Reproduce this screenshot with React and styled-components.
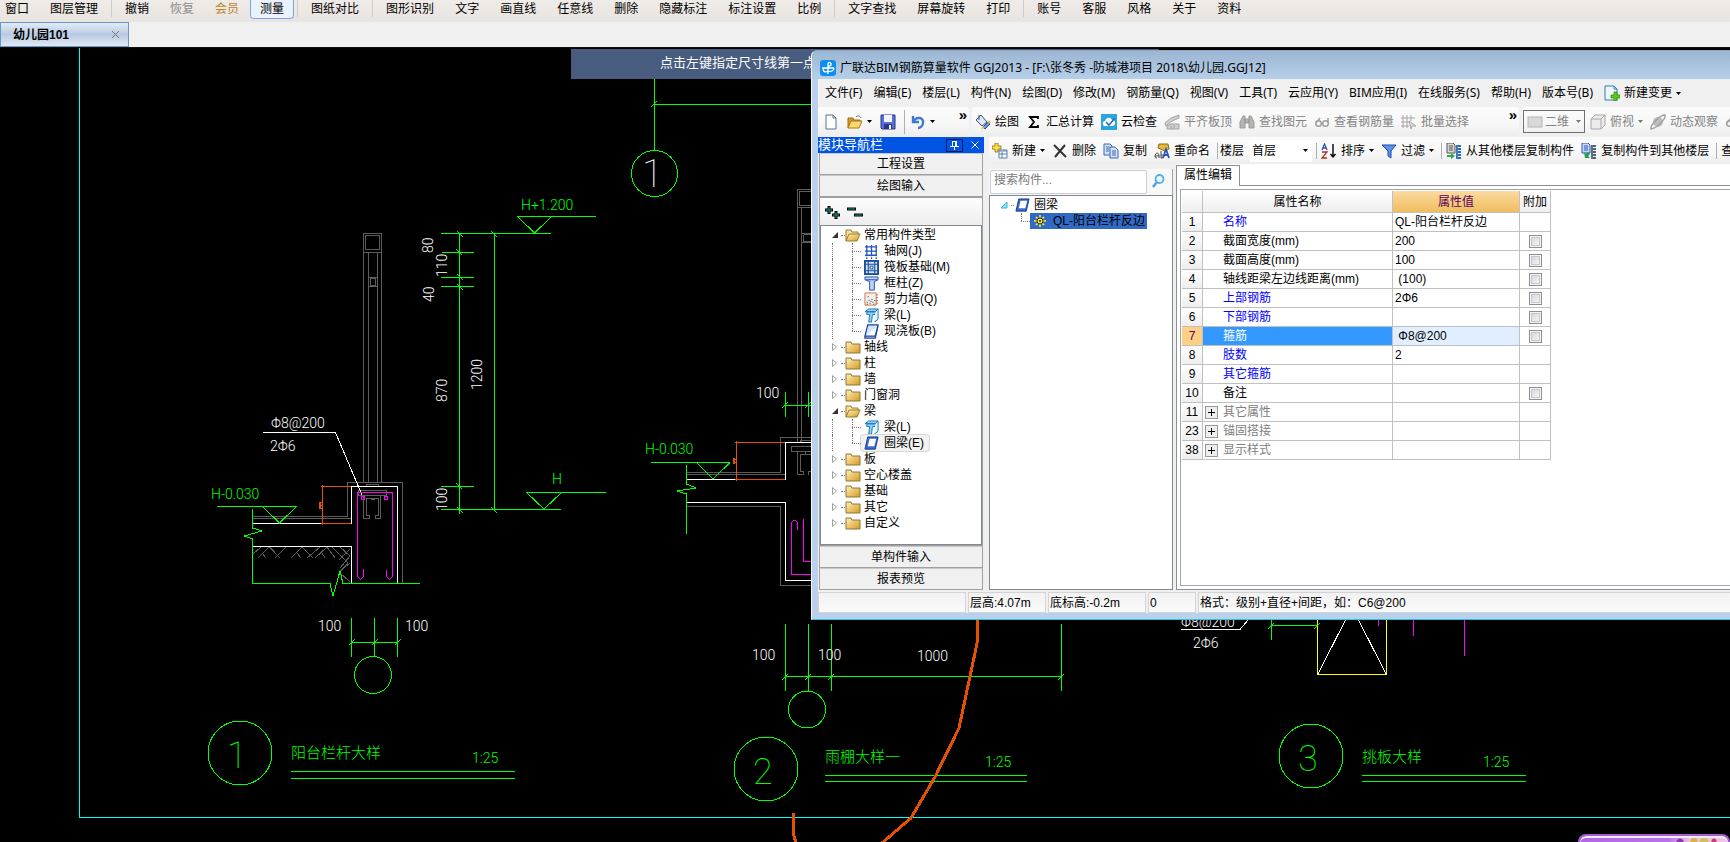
import React, {Fragment} from "react";
import styled, {createGlobalStyle} from "styled-components";

const GlobalStyle = createGlobalStyle`
* { box-sizing: border-box; }
body { margin: 0; overflow: hidden; }
button, input, select { font: inherit; color: inherit; margin: 0; }
`

const sans = `"Liberation Sans", "Noto Sans CJK SC", sans-serif`;
const ui = `"Noto Sans", "Noto Sans CJK SC", sans-serif`;
const cad = `Roboto, "Noto Sans CJK SC", sans-serif`;

const GREEN = "#00ff00";
const GRAY = "#5c5c5c";
const PINK = "#ff00ff";
const ORANGE = "#e65000";

const Page = styled.div`
height: 100vh;
display: flex;
flex-direction: column;
overflow: hidden;
font: 12px/16px ${sans};
color: #000;
background: #000;
`

/* ---------- viewer toolbar ---------- */

const TopBar = styled.header`
flex: none;
height: 22px;
display: flex;
align-items: flex-start;
gap: 1px;
margin-left: -5px;
overflow: hidden;
background: linear-gradient(#efebe8, #e9e4df);
`

const TopButton = styled.button`
flex: none;
height: 19px;
padding: 0 ${p => p.$active ? "9px" : "10px"} 1px;
border: ${p => p.$active ? "1px solid #7da7e8" : "none"};
border-top: none;
border-radius: 0 0 4px 4px;
background: ${p => p.$active ? "#eaf2fd" : "none"};
color: ${p => p.$color || "#000"};
line-height: 16px;
white-space: nowrap;
`

const TopSep = styled.span`
flex: none;
width: 1px;
height: 17px;
margin: 0 2px;
background: #cfcbc8;
`

const TabStrip = styled.nav`
flex: none;
height: 26px;
display: flex;
background: #f0f0f0;
border-bottom: 1px solid #111;
`

const FileTab = styled.div`
width: 129px;
display: flex;
align-items: center;
justify-content: space-between;
padding: 0 8px 0 12px;
border: 1px solid #6c95c6;
background: linear-gradient(#e3ebf5, #b8cbe3 50%, #dfe9f4);
font-weight: bold;
`

const TabClose = styled.button`
width: 9px;
height: 9px;
padding: 0;
border: none;
background: none;
display: flex;
`

/* ---------- drawing area ---------- */

const Canvas = styled.main`
position: relative;
flex: 1;
overflow: hidden;
background: #000;
`

const Sheet = styled.svg`
position: absolute;
inset: 0;
width: 100%;
height: 100%;
shape-rendering: crispEdges;
font-family: ${cad};
font-weight: 300;
`

const Hint = styled.div`
position: absolute;
top: 1px;
left: 33%;
width: 34%;
height: 30px;
padding-left: 89px;
background: #485c80;
color: #fff;
font-size: 13px;
line-height: 28px;
white-space: nowrap;
`

const PurpleBadge = styled.div`
position: absolute;
right: 0;
bottom: 0;
width: 152px;
height: 8px;
overflow: hidden;
border: 2px solid #a35fd0;
border-bottom: none;
border-radius: 14px 14px 0 0;
box-shadow: inset 0 2px #f8e8ff;
background:
radial-gradient(circle at 100px 6px, #8a3aa8 3px, transparent 4px),
radial-gradient(circle at 114px 5px, #d8b050 3px, transparent 4px),
radial-gradient(circle at 124px 6px, #d0c060 4px, transparent 5px),
radial-gradient(circle at 134px 5px, #c83c78 2px, transparent 3px),
linear-gradient(90deg, #b268e0, #b874e4 60%, #ecc8e0 75%);
`

/* ---------- floating window ---------- */

const Window = styled.section`
position: absolute;
top: 2px;
left: 811px;
right: -8px;
height: 570px;
display: flex;
flex-direction: column;
padding: 0 6px 6px;
border: 1px solid #f4f8fc;
border-top-color: #8fa9c4;
border-bottom-color: #2cc4e0;
border-radius: 6px 0 0 0;
background: #b9d1ea;
overflow: hidden;
`

const TitleBar = styled.div`
flex: none;
height: 28px;
margin: 0 -6px;
padding: 5px 8px 0;
display: flex;
align-items: center;
gap: 4px;
background: linear-gradient(#9cb5d2, #b6cfe9);
font-family: ${ui};
font-size: 12px;
white-space: nowrap;
`

const MenuBar = styled.nav`
flex: none;
height: 28px;
padding-left: 2px;
display: flex;
align-items: center;
gap: 1px;
background: #f0f0f0;
font-family: ${ui};
`

const MenuItem = styled.button`
flex: none;
padding: 0 5px;
border: none;
background: none;
display: flex;
align-items: center;
gap: 4px;
white-space: nowrap;
`

const Bar = styled.div`
flex: none;
display: flex;
gap: 3px;
height: ${p => p.$h}px;
background: #f0f0f0;
`

const BarGroup = styled.div`
flex: ${p => p.$grow ? "1 0 auto" : "none"};
width: ${p => p.$w ? p.$w + "px" : "auto"};
display: flex;
align-items: center;
gap: ${p => p.$loose ? 2 : 1}px;
padding-left: ${p => p.$loose ? 2 : 0}px;
border-radius: 3px;
background: linear-gradient(#fcfcfc, #f7f7f7 60%, #ededed);
font-family: ${ui};
`

const ToolButton = styled.button`
flex: none;
height: 22px;
padding: 0 3px;
border: none;
background: none;
display: flex;
align-items: center;
gap: 4px;
color: ${p => p.$off ? "#838383" : "#000"};
white-space: nowrap;
`

const More = styled.button`
align-self: flex-start;
height: 16px;
margin: 0 2px 0 auto;
padding: 0;
border: none;
background: none;
font-family: ${sans};
font-size: 15px;
font-weight: bold;
line-height: 14px;
`

const Sep = styled.span`
flex: none;
width: 1px;
height: ${p => p.$h || 16}px;
margin-left: 3px;
background: #b0b0b0;
`

const ViewPick = styled.label`
flex: none;
width: 62px;
height: 23px;
margin: 0 1px;
padding: 0 3px;
display: flex;
align-items: center;
gap: 2px;
border: 1px solid #707070;
color: #838383;
`

const BareSelect = styled.select`
flex: 1;
min-width: 0;
height: 20px;
padding: 0;
border: none;
background: none;
appearance: none;
outline: none;
`

const FloorPick = styled.label`
flex: none;
display: flex;
align-items: center;
gap: 6px;
padding-left: 1px;
`

const FloorBox = styled.span`
width: 62px;
height: 22px;
padding: 0 4px 0 2px;
display: flex;
align-items: center;
background: #fff;
`

const Body = styled.div`
flex: 1;
min-height: 0;
display: grid;
grid-template-columns: 166px minmax(0, 1fr);
column-gap: 5px;
padding-top: 1px;
background: #f0f0f0;
`

const Dock = styled.aside`
min-height: 0;
display: flex;
flex-direction: column;
padding-bottom: 2px;
`

const DockTitle = styled.div`
flex: none;
height: 16px;
display: flex;
align-items: center;
background: #0054e3;
color: #fff;
font-size: 13px;
line-height: 14px;
`

const PinButton = styled.button`
width: 17px;
height: 13px;
margin-left: auto;
padding: 0;
display: flex;
align-items: center;
justify-content: center;
border: 1px solid #001c58;
border-width: ${p => p.$plain ? "0" : "1px"};
background: none;
& + & { margin: 0 1px 0 3px; }
`

const DockButton = styled.button`
flex: none;
height: 22px;
margin: 0 1px;
padding: 0;
border: 1px solid #a0a0a0;
border-top-color: #c8c8c8;
background: #f0f0f0;
`

const DockPane = styled.div`
flex: 1;
min-height: 0;
display: flex;
flex-direction: column;
margin: 0 1px;
border: 1px solid #a0a0a0;
background: linear-gradient(#fdfdfd, #eee 26px);
`

const PaneTools = styled.div`
flex: none;
height: 27px;
padding: 0 3px;
display: flex;
align-items: center;
gap: 5px;
`

const Bare = styled.button`
padding: 0;
border: none;
background: none;
display: flex;
`

const Tree = styled.ul`
flex: 1;
margin: 0;
padding: 1px 0;
list-style: none;
border: 1px solid #828790;
background: #fff;
`

const TreeRow = styled.li`
height: 16px;
display: flex;
align-items: center;
padding-left: 10px;
white-space: nowrap;
`

const Dots = styled.span`
flex: none;
width: ${p => p.$w}px;
border-top: 1px dotted #777;
`

const Rail = styled.span`
flex: none;
width: ${p => p.$w}px;
height: 16px;
margin-left: 1px;
border-left: 1px dotted #777;
`

const Elbow = styled.span`
flex: none;
width: 9px;
height: 16px;
position: relative;
&::before {
content: "";
position: absolute;
left: 0;
top: 0;
height: ${p => p.$last ? "8px" : "16px"};
border-left: 1px dotted #777;
}
&::after {
content: "";
position: absolute;
left: 0;
right: 0;
top: 8px;
border-top: 1px dotted #777;
}
`

const Leaf = styled.span`
display: flex;
align-items: center;
gap: 5px;
height: 16px;
padding: 0 5px 0 3px;
border-radius: 3px;
box-shadow: ${p => p.$on ? "0 0 0 1px #d8d8d8" : "none"};
background: ${p => p.$on ? "#f2f2f2" : "none"};
`

const Toggle = styled.svg`
flex: none;
width: 8px;
height: 8px;
margin-right: 2px;
`

const Work = styled.div`
min-width: 0;
min-height: 0;
display: flex;
flex-direction: column;
`

const Split = styled.div`
flex: 1;
min-height: 0;
display: grid;
grid-template-columns: 184px minmax(0, 1fr);
column-gap: 3px;
`

const PartList = styled.div`
min-height: 0;
display: flex;
flex-direction: column;
padding-top: 5px;
`

const SearchRow = styled.form`
flex: none;
height: 26px;
padding: 1px 6px 0 1px;
display: flex;
align-items: flex-start;
justify-content: space-between;
background: #f8f8f8;
border-right: 1px solid #a0a0a0;
`

const SearchInput = styled.input`
width: 157px;
height: 24px;
padding: 0 3px 4px;
border: 1px solid #c8cdd8;
border-radius: 2px;
background: #fff;
outline: none;
&::placeholder { color: #7a7a7a; opacity: 1; }
`

const PartTree = styled(Tree)`
margin-bottom: 2px;
padding: 1px 0;
`

const PartRow = styled.li`
height: 16px;
display: flex;
align-items: center;
gap: ${p => p.$gap}px;
padding-left: ${p => p.$indent}px;
white-space: nowrap;
`

const PickedPart = styled.span`
display: flex;
align-items: center;
gap: 7px;
width: 117px;
height: 16px;
padding-left: 4px;
background: #316ac5;
`

const Props = styled.div`
min-width: 0;
min-height: 0;
display: flex;
flex-direction: column;
padding-top: 1px;
margin-bottom: 2px;
background: #fff;
`

const PropTabs = styled.div`
flex: none;
height: 21px;
display: flex;
&::after { content: ""; flex: 1; border-bottom: 1px solid #8b8f99; }
`

const PropTab = styled.button`
width: 64px;
padding: 0 0 2px;
border: 1px solid #8b8f99;
border-bottom: none;
background: #fff;
`

const PropPage = styled.div`
flex: 1;
padding: 3px 0 3px 3px;
border-left: 1px solid #8b8f99;
border-bottom: 1px solid #8b8f99;
`

const PropFrame = styled.div`
height: 100%;
padding: 1px;
border: 1px solid #a0a4ac;
`

const Grid = styled.table`
border-collapse: separate;
border-spacing: 0;
table-layout: fixed;
width: 369px;
`

const HeadCell = styled.th`
width: ${p => p.$w}px;
height: 22px;
padding: 0;
border-right: 1px solid #c0c0c0;
border-bottom: 1px solid #c0c0c0;
background: ${p => p.$on ? "linear-gradient(#fadba0, #f0bd5e)" : "linear-gradient(#fff, #eee)"};
color: ${p => p.$on ? "#5b0060" : "#000"};
font-weight: normal;
`

const Cell = styled.td`
height: 19px;
padding: 0 0 0 2px;
border-right: 1px solid #c0c0c0;
border-bottom: 1px solid #c0c0c0;
background: ${p => p.$bg || "#fff"};
line-height: 16px;
white-space: pre;
`

const NumCell = styled(Cell)`
padding: 0;
text-align: center;
color: ${p => p.$on ? "#5b0060" : "#000"};
background: ${p => p.$on ? "#ffd083" : "linear-gradient(#fff, #eee)"};
`

const NameCell = styled(Cell)`
color: ${p => p.$color};
& > span { display: flex; align-items: center; }
`

const Expander = styled.button`
width: 13px;
height: 13px;
margin-right: 5px;
padding: 1px;
border: 1px solid #999;
background: #eee;
display: flex;
`

const Indent = styled.span`
width: 18px;
`

const CheckCell = styled(Cell)`
padding: 0 0 0 1px;
text-align: center;
`

const Check = styled.input`
appearance: none;
display: block;
width: 13px;
height: 13px;
margin: 0 auto;
border: 1px solid #8e8f8f;
background: linear-gradient(135deg, #cfd2d8, #fafafa);
box-shadow: inset 0 0 0 1px #f4f4f4, inset 0 0 0 2px #c4c8cc;
`

const StatusBar = styled.footer`
flex: none;
height: 21px;
display: flex;
gap: 2px;
background: #f0f0f0;
`

const StatusCell = styled.div`
flex: ${p => p.$w ? "none" : "1"};
width: ${p => p.$w ? p.$w + "px" : "auto"};
padding-left: 1px;
border: 1px solid #d4d4d4;
background: linear-gradient(#f2f2f2, #fafafa);
line-height: 20px;
white-space: nowrap;
`

/* ---------- icons ---------- */

const shapes = {
    logo: <Fragment>
        <rect width="16" height="16" rx="3" fill="#0d8ff2"/>
        <path d="M8 14V4c0-3 4-1 3 1l-3 2M2 8h12M4 8c-2 3 1 5 4 3M14 8c0 3-3 4-6 3" fill="none" stroke="#fff" strokeWidth="1.3"/>
    </Fragment>,
    doc: <path d="M3 1h7l3 3v11H3zM10 1v3h3" fill="#fbfdff" stroke="#5c7388"/>,
    open: <Fragment>
        <path d="M1 14V4h5l1 2h6v3" fill="#d59a2d" stroke="#9c6a12"/>
        <path d="M1 14l3-7h11l-3 7z" fill="#ffd76e" stroke="#a87716"/>
        <path d="M9 3c2-2 4-1 5 1" fill="none" stroke="#3a6ea5"/>
    </Fragment>,
    save: <Fragment>
        <path d="M1 1h14v14H2l-1-1z" fill="#5a6fd8" stroke="#26348a"/>
        <path d="M4 1h8v7H4z" fill="#f2f5ff"/>
        <path d="M4 10h8v5H4z" fill="#26348a"/>
        <path d="M9 11h2v4H9z" fill="#fff"/>
    </Fragment>,
    undo: <path d="M3 2v6h6M3 8c3-6 11-5 10 1 0 3-3 5-5 5" fill="none" stroke="#3e7ad4" strokeWidth="2.4"/>,
    paint: <Fragment>
        <path d="M1 6l5-5 6 7-5 4z" fill="#dfe7f2" stroke="#365078"/>
        <path d="M4 1v5" stroke="#365078"/>
        <path d="M13 8l2 2-5 5-2-2z" fill="#5b9bf0" stroke="#1d4f9e"/>
        <path d="M6 15l2-3 2 2z" fill="#f0b030"/>
        <circle cx="14" cy="8" r="1.5" fill="#f0b030"/>
    </Fragment>,
    sigma: <path d="M12 5V3H4l4 5-4 5h8v-2" fill="none" stroke="#000" strokeWidth="1.8"/>,
    cloud: <Fragment>
        <rect width="16" height="16" fill="#2ba3e0"/>
        <path d="M3 12c-3-3 0-5 1-5 1-4 6-4 7-1 4 0 4 5 1 6z" fill="#fff"/>
        <path d="M5 8l3 3 6-7" fill="none" stroke="#2278b5" strokeWidth="1.6"/>
    </Fragment>,
    align: <g fill="#cfcfcf" stroke="#a4a4a4">
        <path d="M1 9l6-5 8-3v3L8 7l-6 5z"/><path d="M3 15v-3l4-2h8v5zM7 12v3M10 11v4"/>
    </g>,
    find: <g fill="#b4b4b4" stroke="#999">
        <path d="M1 14V8l3-6h2v12zM15 14V8l-3-6h-2v12zM6 5h4v4H6z"/>
    </g>,
    glasses: <g fill="none" stroke="#a0a0a0" strokeWidth="1.5">
        <circle cx="4.500" cy="9.500" r="2.800"/><circle cx="11.500" cy="9.500" r="2.800"/><path d="M2 9l4-5M14 9V4"/>
    </g>,
    batch: <g fill="none" stroke="#a5a5a5">
        <path d="M2 1v13M6 1v13M10 1v6M0 4h14M0 8h8M0 12h8"/><path d="M8 7l7 5h-4l-1 3z" fill="#ddd"/>
    </g>,
    plane: <rect x="1" y="3" width="14" height="10" fill="#d9d9d9" stroke="#b5b5b5"/>,
    cube: <path d="M1 5l4-4h10v10l-4 4H1zM1 5h10v10M11 5l4-4" fill="#ececec" stroke="#a8a8a8"/>,
    orbit: <Fragment>
        <circle cx="8" cy="8" r="5" fill="#bdbdbd"/>
        <path d="M1 15c-1-4 9-14 14-14 1 4-8 13-14 14z" fill="none" stroke="#a0a0a0" strokeWidth="1.4"/>
    </Fragment>,
    create: <Fragment>
        <path d="M3 0h3v3h3v3H6v3H3V6H0V3h3z" fill="#ffe24a" stroke="#8a6d00" strokeWidth=".8"/>
        <path d="M7 7h8v8H7z" fill="#fff" stroke="#5a7fae"/>
        <path d="M7 8h8M7 11h8M10 9v6" stroke="#5a7fae"/>
    </Fragment>,
    remove: <path d="M2 2l12 12M13 2L3 14" stroke="#333" strokeWidth="2"/>,
    copy: <g fill="#d2e2fa" stroke="#3c66ac">
        <path d="M1 1h6l2 2v9H1z"/><path d="M7 4h5l3 3v8H7z"/><path d="M9 8h4M9 10h4M9 12h4M3 4h3M3 6h3M3 8h3"/>
    </g>,
    rename: <Fragment>
        <path d="M5 1h9l1 5-4 2-7-3z" fill="#e8b93c" stroke="#8a6713"/>
        <path d="M1 14c0-5 4-5 4-1v2M5 13c-4-1-5 2-2 2M7 8v7c3 1 3-4 0-3" fill="none" stroke="#444"/>
        <path d="M9 15l3-9 3 9M10 12h4" fill="none" stroke="#2c55b8" strokeWidth="1.8"/>
    </Fragment>,
    sort: <Fragment>
        <path d="M1 7l2.500-6L6 7M2 5h3" fill="none" stroke="#2c55b8" strokeWidth="1.3"/>
        <path d="M1 9h5l-5 6h5" fill="none" stroke="#a83232" strokeWidth="1.3"/>
        <path d="M12 1v12M9.500 11l2.500 3 2.500-3" fill="none" stroke="#000" strokeWidth="1.4"/>
    </Fragment>,
    funnel: <path d="M1 2h14l-5 6v7l-3-2V8z" fill="#5a92ea" stroke="#1f4da6"/>,
    floors: <Fragment>
        <path d="M1 0h6l2 2v8H1z" fill="#d8d8d8" stroke="#555"/>
        <path d="M3 3h4M3 5h4M3 7h4" stroke="#555"/>
        <path d="M12 3h3M12 6h3M12 9h3M12 12h3M12 15h3M11 2v14" stroke="#2d6ab8" strokeWidth="1.8"/>
        <path d="M1 12h4v-2l4 3-4 3v-2H1z" fill="#30a848"/>
    </Fragment>,
    floors2: <Fragment>
        <path d="M1 0h6l2 2v8H1z" fill="#c4daf8" stroke="#2d55b8"/>
        <path d="M3 3h4M3 5h4M3 7h4" stroke="#2d55b8"/>
        <path d="M12 3h3M12 6h3M12 9h3M12 12h3M12 15h3M11 2v14" stroke="#4c6472" strokeWidth="1.800"/>
        <path d="M3 9l1 6h5l-2-2 2-2-2-2-2 2z" fill="#20a040"/>
    </Fragment>,
    change: <Fragment>
        <path d="M1 1h9l3 3v11H1zM10 1v3h3" fill="#eef6ff" stroke="#2c7cb8"/>
        <path d="M10 7h3v3h3v3h-3v3h-3v-3H7v-3h3z" fill="#5cc81e" stroke="#2f8a0a" strokeWidth=".7"/>
    </Fragment>,
    search: <Fragment>
        <circle cx="9.500" cy="6" r="4" fill="#e9f6fe" stroke="#55aee6" strokeWidth="1.800"/>
        <path d="M6.500 9.500L3 14" stroke="#4a9ee0" strokeWidth="2.400"/>
    </Fragment>,
    folder: <Fragment>
        <path d="M1 3h5l1 2h8v9H1z" fill="url(#gold)" stroke="#8d7434"/>
    </Fragment>,
    folderOpen: <Fragment>
        <path d="M1 14V3h5l1 2h6v3" fill="#f8e29a" stroke="#9b7a28"/>
        <path d="M1 14l3-7h11l-3 7z" fill="url(#gold)" stroke="#9b7a28"/>
    </Fragment>,
    axis: <path d="M3 1v12M8 1v12M13 1v12M1 3h13M1 7.500h13M1 12h13M3 14v2M8 14v2M13 14v2" fill="none" stroke="#2456b8" strokeWidth="1.400"/>,
    raft: <Fragment>
        <rect x="1" y="1" width="14" height="14" fill="#d5e5fa" stroke="#1b4f96" strokeWidth="2"/>
        <path d="M4.500 1v14M11.500 1v14M1 4.500h14M1 11.500h14" stroke="#1b4f96" strokeWidth="1.200"/>
        <rect x="6.500" y="6.500" width="3" height="3" fill="#fff" stroke="#1b4f96"/>
    </Fragment>,
    column: <path d="M1 1h14v3l-4 2v9H6V6L1 4zM2 4h12" fill="#bcd4fb" stroke="#1f4da6"/>,
    wall: <Fragment>
        <path d="M1 1h12v13H1z" fill="#f1efee" stroke="#c8724a"/>
        <path d="M3 11h1M5 9h1M6 12h1M8 8h1M9 11h1M4 5h1M10 13h1M7 10h1M3 13h1M11 9h1" stroke="#333"/>
        <path d="M13 3h2M13 6h2M13 9h2M13 12h2" stroke="#d06020"/>
    </Fragment>,
    beam: <Fragment>
        <path d="M1 4l4-3h10l-3 3zM3 4h9v3H9l-1 8H5l1-8H3z" fill="#8fd0fa" stroke="#1878b8"/>
        <path d="M12 4l3-3v11l-4 3" fill="#e0f3ff" stroke="#1878b8"/>
    </Fragment>,
    slab: <path d="M4 1h11l-3 12H1zM1 13v2h11l3-13" fill="#d4e6fd" stroke="#1c3f9a" strokeWidth="1.300"/>,
    ring: <Fragment>
        <path d="M4 1h11l-3 13H1z" fill="#3b6ccc" stroke="#12388a"/>
        <path d="M6 3h7l-2 8H4z" fill="#fff"/>
    </Fragment>,
};

function Icon({name, size = 16}){
    return <svg width={size} height={size} viewBox="0 0 16 16" aria-hidden="true">{shapes[name]}</svg>
}

function Arrow({color = "#000"}){
    return <svg width="5" height="3" viewBox="0 0 5 3" aria-hidden="true"><path d="M0 0h5L2.500 3z" fill={color}/></svg>
}

/* ---------- data ---------- */

const topItems = [
    "窗口", "图层管理", "|", "撤销", {t: "恢复", c: "#8d8d8d"}, {t: "会员", c: "#b8862c"}, {t: "测量", on: true}, "|",
    "图纸对比", "|", "图形识别", "文字", "画直线", "任意线", "删除", "隐藏标注", "标注设置", "比例", "|",
    "文字查找", "屏幕旋转", "打印", "|", "账号", "客服", "风格", "关于", "资料",
];

const menus = [
    "文件(F)", "编辑(E)", "楼层(L)", "构件(N)", "绘图(D)", "修改(M)", "钢筋量(Q)", "视图(V)", "工具(T)",
    "云应用(Y)", "BIM应用(I)", "在线服务(S)", "帮助(H)", "版本号(B)",
];

const mainTools = [
    ["paint", "绘图"], ["sigma", "汇总计算"], ["cloud", "云检查"], ["align", "平齐板顶", true],
    ["find", "查找图元", true], ["glasses", "查看钢筋量", true], ["batch", "批量选择", true],
];

const tree = [
    {t: "常用构件类型", open: true, kids: [
        ["axis", "轴网(J)"], ["raft", "筏板基础(M)"], ["column", "框柱(Z)"],
        ["wall", "剪力墙(Q)"], ["beam", "梁(L)"], ["slab", "现浇板(B)"],
    ]},
    {t: "轴线"}, {t: "柱"}, {t: "墙"}, {t: "门窗洞"},
    {t: "梁", open: true, kids: [["beam", "梁(L)"], ["ring", "圈梁(E)", true]]},
    {t: "板"}, {t: "空心楼盖"}, {t: "基础"}, {t: "其它"}, {t: "自定义"},
];

const rows = [
    {n: 1, name: "名称", blue: true, v: "QL-阳台栏杆反边"},
    {n: 2, name: "截面宽度(mm)", v: "200", check: true},
    {n: 3, name: "截面高度(mm)", v: "100", check: true},
    {n: 4, name: "轴线距梁左边线距离(mm)", v: " (100)", check: true},
    {n: 5, name: "上部钢筋", blue: true, v: "2Φ6", check: true},
    {n: 6, name: "下部钢筋", blue: true, v: "", check: true},
    {n: 7, name: "箍筋", on: true, v: " Φ8@200", check: true},
    {n: 8, name: "肢数", blue: true, v: "2"},
    {n: 9, name: "其它箍筋", blue: true, v: ""},
    {n: 10, name: "备注", v: "", check: true},
    {n: 11, name: "其它属性", group: true},
    {n: 23, name: "锚固搭接", group: true},
    {n: 38, name: "显示样式", group: true},
];

/* ---------- drawing parts ---------- */

function Line({d, c = GREEN, w = 1}){
    return <path d={d} fill="none" stroke={c} strokeWidth={w}/>
}

function Label({x, y, c = "#fff", size = 14, turn, thin, children}){
    return (
        <text x={x} y={y} fill={c} fontSize={size} fontWeight={thin ? 100 : undefined}
            transform={turn ? `rotate(-90 ${x} ${y})` : undefined}>{children}</text>
    )
}

// tick marks of a dimension line, sloping down (back) or up
function Ticks({at, back}){
    const s = back ? -3 : 3;
    return <Line d={at.map(([x, y]) => `M${x - 3} ${y + s}L${x + 3} ${y - s}`).join("")}/>
}

function Caption({cx, cy, n, x1, x2, y, title, scaleX, gap = 6}){
    return (
        <g>
            <circle cx={cx + 1} cy={cy + 1} r="32" fill="none" stroke={GREEN}/>
            <Label x={cx - 12} y={cy + 16} c={GREEN} size={36} thin>{n}</Label>
            <Label x={x1} y={y - 13} c={GREEN} size={15}>{title}</Label>
            <Label x={scaleX} y={y - 8} c={GREEN}>1:25</Label>
            <Line d={`M${x1} ${y}.5H${x2}M${x1} ${y + gap}.5H${x2}`}/>
        </g>
    )
}

function Drawing(){
    return (
        <Sheet viewBox="0 48 1730 794" preserveAspectRatio="xMinYMin slice" role="img" aria-label="大样图">
            <Line c="#00ffff" d="M79.500 48V817.500H1730"/>

            {/* 1: balcony rail */}
            <Line c={GRAY} d="M363.500 482V233.500H381.500V482M365.500 235.500H379.500V249.500H365.500zM363.500 252.500H381.500M368.500 252V482M377.500 252V482M368.500 277.500H377.500M368.500 286.500H377.500M370.500 278.500H375.500V285.500H370.500z"/>
            <Line c={GRAY} d="M252 516.500H347.500V482.500H402.500V583M252 518.500H351M366.500 486V484.500H378.500V486M358.500 490.500H386.500V495.500H358.500zM363.500 496V518.500H369.500V515.500H366.500V498.500H378.500V515.500H375.500V518.500H380.500V496M370.500 499.500H374.500"/>
            <Line c={GRAY} d="M253 554l8-7M258 558l11-11l11 11M262 553l4 5M275 558l11-11M270 547l5 5M291 558l11-11l11 11M297 553l4 5M307 558l13-11M315 558l12-11l8 11M322 553l3 5M332 547l16 16l-9 9l11 10M350 549l-11 11M350 556l-10 12M340 547l10 9M339 572l11-9"/>
            <Line c="#fff" d="M252 523.500H351.500V486.500H397.500V583M252 546.500H351.500V583M263 432.500H335.500L362 495"/>
            <Line c={ORANGE} d="M351 486.500H321M322.500 485V525M321 523.500H351M319.500 502V508M320.500 503V508M319 502.500H322M319 505.500H322M319 508.500H322"/>
            <Line c={PINK} d="M363.500 569V576Q360.500 582 357.500 576V492.500H392.500V576Q389.500 582 386.500 576V570M361.500 496.500h3v3h-3zM384.500 496.500h3v3h-3z"/>
            <Line d="M441 233.500H551M459.500 233V514M494.500 233V510M442 252.500H474M441 277.500H474M441 286.500H474M441 486.500H474M441 509.500H561"/>
            <Ticks back at={[[460, 234], [494, 234], [459, 252], [460, 277], [460, 287], [459, 486], [460, 510], [494, 510]]}/>
            <Line d="M517 216.500H596M518 217L534.500 233L551 217M526 492.500H606M527 493L544 509L561 493"/>
            <Line d="M217 506.500H297M263 507L279.500 523L296 507M252.500 509V528L262 531L244 536L252.500 539V583.500H330L333 596L340 571L343 583.500H420"/>
            <Line d="M351.500 618V657M374.500 618V656M397.500 618V657M351 642.500H398"/>
            <Ticks at={[[352, 642], [375, 642], [398, 642]]}/>
            <circle cx="373" cy="675" r="18.500" fill="none" stroke={GREEN}/>
            <Label x={521} y={210} c={GREEN}>H+1.200</Label>
            <Label x={552} y={484} c={GREEN}>H</Label>
            <Label x={211} y={499} c={GREEN}>H-0.030</Label>
            <Label x={433} y={253} turn>80</Label>
            <Label x={447} y={277} turn>110</Label>
            <Label x={434} y={302} turn>40</Label>
            <Label x={447} y={402} turn>870</Label>
            <Label x={482} y={390} turn>1200</Label>
            <Label x={447} y={511} turn>100</Label>
            <Label x={271} y={428}>Φ8@200</Label>
            <Label x={270} y={451}>2Φ6</Label>
            <Label x={318} y={631}>100</Label>
            <Label x={405} y={631}>100</Label>
            <Caption cx={239} cy={752} n="1" x1={291} x2={515} y={771} title="阳台栏杆大样" scaleX={472} gap={7}/>

            {/* 2: canopy */}
            <Line d="M654.500 79V150M654 104.500H812"/>
            <Ticks at={[[654, 104]]}/>
            <circle cx="654.500" cy="173.500" r="23" fill="none" stroke={GREEN}/>
            <Label x={642} y={187} size={38} thin>1</Label>
            <Line c={GRAY} d="M797.500 442V189.500H812M812 191.500H799.500V205.500H812M797.500 207.500H812M801.500 207V442M801.500 233.500H812M801.500 242.500H812M803.500 234.500V241.500H812M803.500 234.500H812"/>
            <Line c={GRAY} d="M686 472.500H780.500V437.500H812M686 474.500H785M686 506.500H780.500V585.500H812M800.500 442V440.500H812M812 446.500H791.500V451.500H812M797.500 452V474.500H803.500V471.500H800.500V454.500H812M805.500 452V455M812 471.500H808V474.500"/>
            <Line c="#fff" d="M686 479.500H785.500V442.500H812M686 502.500H785.500V580.500H812"/>
            <Line c={ORANGE} d="M785 442.500H735M736.500 441V481M735 479.500H785M733.500 458V464M734.500 458V464M733 459.500H736M733 462.500H736"/>
            <Line c={PINK} d="M797.500 530V523Q794.500 517 791.500 523V574.500H812M803.500 519V561.500H812"/>
            <Line d="M785.500 392V417M808.500 392V417M785 405.500H812"/>
            <Line d="M651 462.500H730M697 463L713 479L729.500 463M686.500 465V484L696 488L677 491L686.500 494V534"/>
            <Ticks at={[[785, 405], [808, 405]]}/>
            <Label x={756} y={398}>100</Label>
            <Label x={645} y={454} c={GREEN}>H-0.030</Label>
            <Line d="M785.500 624V691M808.500 624V691M831.500 624V691M1061.500 624V691M785 676.500H1062"/>
            <Ticks at={[[785, 677], [808, 677], [831, 677], [1061, 677]]}/>
            <circle cx="807" cy="709.500" r="18.500" fill="none" stroke={GREEN}/>
            <Label x={752} y={660}>100</Label>
            <Label x={818} y={660}>100</Label>
            <Label x={917} y={661}>1000</Label>
            <Caption cx={765} cy={768} n="2" x1={825} x2={1027} y={775} title="雨棚大样一" scaleX={985}/>
            <Line c={ORANGE} w={3} d="M977.500 615V641L959 728L935 777L911 818L882 843M793.500 813V834L796 843"/>

            {/* 3: cantilever slab */}
            <Label x={1181} y={627}>Φ8@200</Label>
            <Label x={1193} y={648}>2Φ6</Label>
            <Line c="#fff" d="M1181 629.500H1240L1248 620M1318 674L1349 613M1386 674L1355 613"/>
            <Line c="#ffff00" d="M1317.500 615V674.500H1386.500V615"/>
            <Line d="M1271.500 615V640M1271 625.500H1318"/>
            <Ticks at={[[1271, 626], [1317, 626]]}/>
            <Line c={PINK} d="M1378.500 615V626M1413.500 615V636M1464.500 615V656"/>
            <Caption cx={1310} cy={755} n="3" x1={1362} x2={1526} y={775} title="挑板大样" scaleX={1483}/>
        </Sheet>
    )
}

/* ---------- window parts ---------- */

function NavDock(){
    return (
        <Dock>
            <DockTitle>
                模块导航栏
                <PinButton aria-label="固定">
                    <svg width="9" height="9" viewBox="0 0 9 9"><path d="M2 .5h5M2.500 0v5M5.500 0v5M6.500 0v5M0 5.500h9M4.500 6v3" stroke="#fff"/></svg>
                </PinButton>
                <PinButton $plain aria-label="关闭">
                    <svg width="8" height="8" viewBox="0 0 8 8"><path d="M.5.500l7 7M7.500.500l-7 7" stroke="#fff"/></svg>
                </PinButton>
            </DockTitle>
            <DockButton>工程设置</DockButton>
            <DockButton>绘图输入</DockButton>
            <DockPane>
                <PaneTools>
                    <Bare aria-label="全部展开">
                        <svg width="18" height="16" viewBox="0 0 18 16"><path d="M2 6h8M6 2v8M9 11h8M13 7v8" stroke="#000" strokeWidth="3"/><path d="M3 6h6M6 3v6M10 11h6M13 8v6" stroke="#1f9a86"/></svg>
                    </Bare>
                    <Bare aria-label="全部折叠">
                        <svg width="18" height="16" viewBox="0 0 18 16"><path d="M1 5h9M8 11h9" stroke="#000" strokeWidth="3"/><path d="M2 5h7M9 11h7" stroke="#1f9a86"/></svg>
                    </Bare>
                </PaneTools>
                <Tree>
                    {tree.map((node) => (
                        <Fragment key={node.t}>
                            <TreeRow>
                                <Toggle viewBox="0 0 8 8">
                                    {node.open
                                        ? <path d="M7 1v6H1z" fill="#333"/>
                                        : <path d="M1.500.500v7l4-3.500z" fill="#fff" stroke="#a0a0a0"/>}
                                </Toggle>
                                <Dots $w={4}/>
                                <Icon name={node.open ? "folderOpen" : "folder"}/>
                                <Leaf>{node.t}</Leaf>
                            </TreeRow>
                            {(node.kids || []).map(([icon, t, on], i) => (
                                <TreeRow key={t}>
                                    <Rail $w={20}/>
                                    <Elbow $last={i === node.kids.length - 1}/>
                                    <Leaf $on={on}><Icon name={icon} size={15}/>{t}</Leaf>
                                </TreeRow>
                            ))}
                        </Fragment>
                    ))}
                </Tree>
            </DockPane>
            <DockButton>单构件输入</DockButton>
            <DockButton>报表预览</DockButton>
        </Dock>
    )
}

function PropertyGrid(){
    return (
        <Grid>
            <thead>
                <tr>
                    <HeadCell $w={21}/>
                    <HeadCell $w={190}>属性名称</HeadCell>
                    <HeadCell $w={127} $on>属性值</HeadCell>
                    <HeadCell $w={31}>附加</HeadCell>
                </tr>
            </thead>
            <tbody>
                {rows.map((r) => (
                    <tr key={r.n}>
                        <NumCell $on={r.on}>{r.n}</NumCell>
                        <NameCell $bg={r.on && "#3399ff"} $color={r.on ? "#fff" : r.blue ? "#0000ff" : r.group ? "#808080" : "#000"}>
                            <span>
                                {r.group
                                    ? <Expander aria-label={`展开${r.name}`}><svg width="9" height="9" viewBox="0 0 9 9"><path d="M1 4.500h7M4.500 1v7" stroke="#000"/></svg></Expander>
                                    : <Indent/>}
                                {r.name}
                            </span>
                        </NameCell>
                        <Cell $bg={r.on && "#e0efff"}>{r.v}</Cell>
                        <CheckCell>{r.check && <Check type="checkbox" aria-label={`附加 ${r.name}`}/>}</CheckCell>
                    </tr>
                ))}
            </tbody>
        </Grid>
    )
}

function SteelWindow(){
    return (
        <Window>
            <TitleBar>
                <Icon name="logo"/>
                {"广联达BIM钢筋算量软件 GGJ2013 - [F:\\张冬秀 -防城港项目 2018\\幼儿园.GGJ12]"}
            </TitleBar>
            <MenuBar>
                {menus.map((m) => <MenuItem key={m}>{m}</MenuItem>)}
                <MenuItem><Icon name="change"/>新建变更<Arrow/></MenuItem>
            </MenuBar>
            <Bar $h={29}>
                <BarGroup $w={151} $loose>
                    <ToolButton aria-label="新建"><Icon name="doc"/></ToolButton>
                    <ToolButton aria-label="打开"><Icon name="open"/><Arrow/></ToolButton>
                    <ToolButton aria-label="保存"><Icon name="save"/></ToolButton>
                    <Sep $h={24}/>
                    <ToolButton aria-label="撤销"><Icon name="undo"/><Arrow/></ToolButton>
                    <More aria-label="更多">»</More>
                </BarGroup>
                <BarGroup $w={547}>
                    {mainTools.map(([icon, t, off]) => (
                        <ToolButton key={t} $off={off}><Icon name={icon}/>{t}</ToolButton>
                    ))}
                    <More aria-label="更多">»</More>
                </BarGroup>
                <BarGroup $grow>
                    <ViewPick>
                        <Icon name="plane"/>
                        <BareSelect aria-label="视图模式"><option>二维</option></BareSelect>
                        <Arrow color="#777"/>
                    </ViewPick>
                    <ToolButton $off><Icon name="cube"/>俯视<Arrow color="#777"/></ToolButton>
                    <ToolButton $off><Icon name="orbit"/>动态观察</ToolButton>
                    <ToolButton $off aria-label="旋转"><Icon name="glasses"/></ToolButton>
                </BarGroup>
            </Bar>
            <Body>
                <NavDock/>
                <Work>
                    <Bar $h={27}>
                        <BarGroup $grow>
                            <ToolButton><Icon name="create"/>新建<Arrow/></ToolButton>
                            <ToolButton><Icon name="remove"/>删除</ToolButton>
                            <ToolButton><Icon name="copy"/>复制</ToolButton>
                            <ToolButton><Icon name="rename"/>重命名</ToolButton>
                            <Sep/>
                            <FloorPick>
                                楼层
                                <FloorBox>
                                    <BareSelect><option>首层</option></BareSelect>
                                    <Arrow/>
                                </FloorBox>
                            </FloorPick>
                            <Sep/>
                            <ToolButton><Icon name="sort"/>排序<Arrow/></ToolButton>
                            <ToolButton><Icon name="funnel"/>过滤<Arrow/></ToolButton>
                            <Sep/>
                            <ToolButton><Icon name="floors"/>从其他楼层复制构件</ToolButton>
                            <ToolButton><Icon name="floors2"/>复制构件到其他楼层</ToolButton>
                            <Sep/>
                            <ToolButton>查</ToolButton>
                        </BarGroup>
                    </Bar>
                    <Split>
                        <PartList>
                            <SearchRow onSubmit={(e) => e.preventDefault()}>
                                <SearchInput aria-label="搜索构件" placeholder="搜索构件..."/>
                                <ToolButton $off aria-label="搜索"><Icon name="search"/></ToolButton>
                            </SearchRow>
                            <PartTree>
                                <PartRow $indent={10} $gap={1}>
                                    <Toggle viewBox="0 0 8 8"><path d="M7 1v6H1z" fill="#8fe4fb" stroke="#39b8dd"/></Toggle>
                                    <Dots $w={3}/>
                                    <Icon name="ring" size={15}/>
                                    <Leaf>圈梁</Leaf>
                                </PartRow>
                                <PartRow $indent={31} $gap={0}>
                                    <Elbow $last/>
                                    <PickedPart>
                                        <svg width="12" height="12" viewBox="0 0 12 12"><path d="M6 0v12M0 6h12M2 2l8 8M10 2l-8 8" stroke="#ffee30" strokeWidth="1.600"/><circle cx="6" cy="6" r="3" fill="#ffee30" stroke="#222"/><circle cx="6" cy="6" r="1" fill="#222"/></svg>
                                        QL-阳台栏杆反边
                                    </PickedPart>
                                </PartRow>
                            </PartTree>
                        </PartList>
                        <Props>
                            <PropTabs><PropTab>属性编辑</PropTab></PropTabs>
                            <PropPage>
                                <PropFrame><PropertyGrid/></PropFrame>
                            </PropPage>
                        </Props>
                    </Split>
                </Work>
            </Body>
            <StatusBar>
                <StatusCell $w={148}/>
                <StatusCell $w={78}>层高:4.07m</StatusCell>
                <StatusCell $w={98}>底标高:-0.2m</StatusCell>
                <StatusCell $w={48}>0</StatusCell>
                <StatusCell>格式：级别+直径+间距，如：C6@200</StatusCell>
            </StatusBar>
        </Window>
    )
}

export default function App(){

    return(
        <Page>
            <GlobalStyle/>
            <svg width="0" height="0" style={{position: "absolute"}} aria-hidden="true">
                <defs>
                    <linearGradient id="gold" x1="0" y1="0" x2="1" y2="1">
                        <stop offset="0" stopColor="#fff3b8"/>
                        <stop offset="1" stopColor="#d89a20"/>
                    </linearGradient>
                </defs>
            </svg>
            <TopBar>
                {topItems.map((item, i) => {
                    if (item === "|") return <TopSep key={i}/>
                    const t = item.t || item;
                    return <TopButton key={i} $active={item.on} $color={item.c}>{t}</TopButton>
                })}
            </TopBar>
            <TabStrip>
                <FileTab>
                    幼儿园101
                    <TabClose aria-label="关闭标签">
                        <svg width="9" height="9" viewBox="0 0 9 9"><path d="M1 1l7 7M8 1L1 8" stroke="#777"/></svg>
                    </TabClose>
                </FileTab>
            </TabStrip>
            <Canvas>
                <Drawing/>
                <Hint>点击左键指定尺寸线第一点</Hint>
                <PurpleBadge/>
                <SteelWindow/>
            </Canvas>
        </Page>
    )
}
